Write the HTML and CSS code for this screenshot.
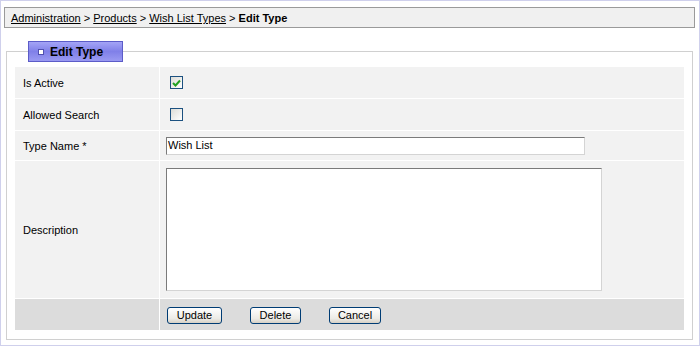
FILE: index.html
```html
<!DOCTYPE html>
<html>
<head>
<meta charset="utf-8">
<link rel="stylesheet" href="styles.css">
</head>
<body>
<div class="frame">
  <div class="crumbs">
    <a href="#">Administration</a> &gt; <a href="#">Products</a> &gt; <a href="#">Wish List Types</a> &gt; <b>Edit Type</b>
  </div>
  <fieldset class="box">
    <legend class="legend"><span class="bullet"></span>Edit Type</legend>
    <div class="form">
      <div class="label">Is Active</div>
      <div class="value"><span class="check checked"><svg width="9" height="8" viewBox="0 0 9 8"><path d="M1 4 L3.5 6.5 L8 1.5" fill="none" stroke="#21a121" stroke-width="2"/></svg></span></div>
      <div class="label">Allowed Search</div>
      <div class="value"><span class="check"></span></div>
      <div class="label">Type Name *</div>
      <div class="value"><div class="text">Wish List</div></div>
      <div class="label">Description</div>
      <div class="value top"><div class="area"></div></div>
      <div class="label foot"></div>
      <div class="value foot buttons">
        <span class="btn b1">Update</span>
        <span class="btn b2">Delete</span>
        <span class="btn b3">Cancel</span>
      </div>
    </div>
  </fieldset>
</div>
</body>
</html>
```
FILE: styles.css
```css
html, body { margin: 0; padding: 0; background: #fff; }
body { font-family: "Liberation Sans", Arial, sans-serif; font-size: 11px; color: #000; }
.frame {
  width: 700px; height: 346px; box-sizing: border-box;
  border: 1px solid #cfd0ec;
  padding: 6px 4px 0 3px;
}
.crumbs {
  height: 21px; box-sizing: border-box;
  border: 1px solid #9a9a9a; background: #f0f0f0;
  padding: 4px 0 0 6px; line-height: 13px;
}
.crumbs a { color: #000; text-decoration: underline; }
.crumbs b { font-weight: bold; }
.box {
  margin: 13px 2px 0 2px; padding: 5px 8px 9px 8px;
  border: 1px solid #d0d0d0;
  min-width: 0;
}
.legend {
  margin-left: 13px; padding: 0 0 0 9px;
  height: 21px; box-sizing: border-box; width: 95px;
  border: 1px solid #5c5cc8;
  background: linear-gradient(#a4a4f6, #8080e8 50%, #9a9af2);
  font-family: "Liberation Sans", Arial, sans-serif; font-weight: bold; font-size: 12px;
  white-space: nowrap; color: #000;
  display: flex; align-items: center; gap: 6px;
}
.bullet { width: 4px; height: 4px; border: 1px solid #5050b0; background: #fff; display: inline-block; flex: none; }
.form {
  display: grid; grid-template-columns: 144px 1fr;
  grid-template-rows: 31px 31px 29px 137px 31px;
  gap: 1px;
}
.label { background: #f2f2f2; padding-left: 8px; display: flex; align-items: center; }
.value { background: #f2f2f2; padding-left: 6px; display: flex; align-items: center; }
.value.top { align-items: flex-start; padding-top: 7px; }
.foot { background: #dcdcdc; }
.check {
  margin-left: 4px; width: 13px; height: 13px; box-sizing: border-box;
  border: 1px solid #1c5180;
  background: linear-gradient(135deg, #dcdcd7, #fff);
  display: inline-flex; align-items: center; justify-content: center;
}
.text {
  width: 419px; height: 18px; box-sizing: border-box;
  border: 1px solid; border-color: #7a7a7a #d4d4d4 #d4d4d4 #7a7a7a;
  background: #fff; padding-left: 1px; line-height: 15px;
}
.area {
  width: 436px; height: 123px; box-sizing: border-box;
  border: 1px solid; border-color: #7a7a7a #d4d4d4 #d4d4d4 #7a7a7a;
  background: #fff;
}
.buttons { gap: 28px; padding-left: 7px; padding-top: 2px; }
.btn {
  height: 17px; box-sizing: border-box;
  border: 1px solid #003c74; border-radius: 3px;
  background: linear-gradient(#fff, #ecebe6 70%, #d6d0c5);
  line-height: 15px; display: inline-block; text-align: center;
}
.b1 { width: 55px; }
.b2 { width: 51px; }
.b3 { width: 52px; }
```
